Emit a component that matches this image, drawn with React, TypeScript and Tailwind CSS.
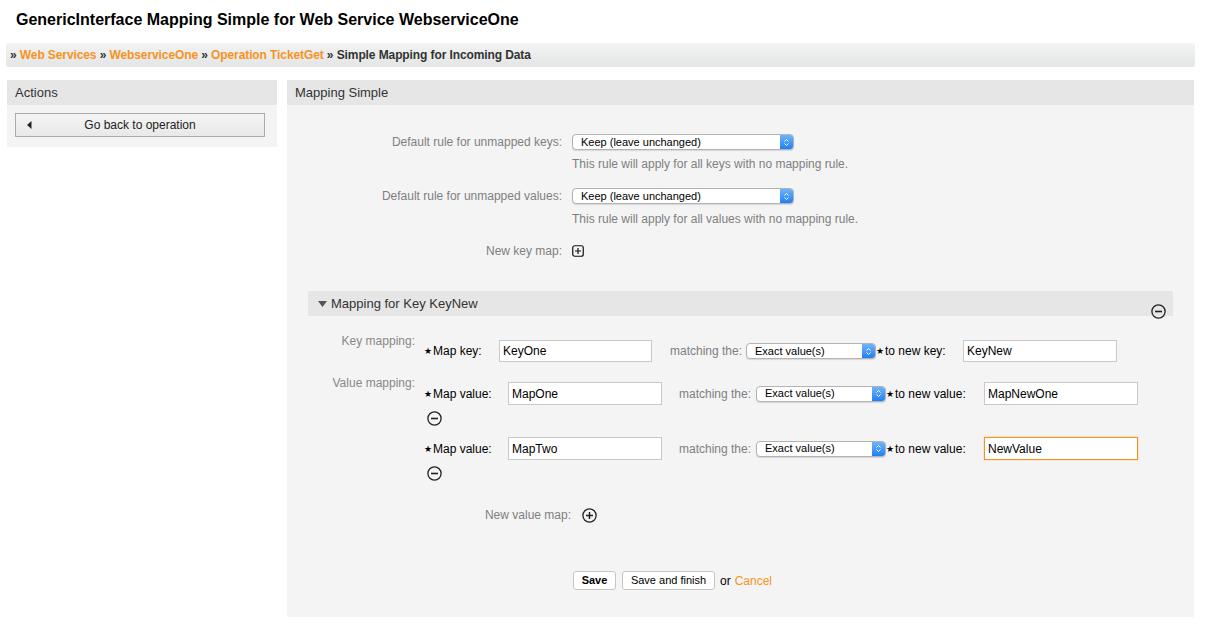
import React from "react";

const Star = () => <span className="text-[9px] leading-none mr-[1px] relative top-[-1px]">★</span>;

function Select({ w, h, label }: { w: string; h: string; label: string }) {
  return (
    <div className={`flex items-stretch bg-white border border-[#b3b3b3] rounded-[4px] shadow-[0_1px_1px_rgba(0,0,0,0.12)] overflow-hidden ${w} ${h}`}>
      <span className="flex-1 flex items-center pl-[8px] text-[11px] text-black leading-none whitespace-nowrap">{label}</span>
      <div className="w-[13px] bg-linear-to-b from-[#6db4fb] to-[#1c7ff5] flex items-center justify-center">
        <svg width="7" height="9" viewBox="0 0 7 9">
          <path d="M1.5 3.5 L3.5 1.5 L5.5 3.5" stroke="white" strokeWidth="1" fill="none" />
          <path d="M1.5 5.5 L3.5 7.5 L5.5 5.5" stroke="white" strokeWidth="1" fill="none" />
        </svg>
      </div>
    </div>
  );
}

const PlusSquare = () => (
  <svg width="12" height="12" viewBox="0 0 12 12">
    <rect x="0.75" y="0.75" width="10.5" height="10.5" rx="2" stroke="#111" strokeWidth="1.2" fill="none" />
    <path d="M6 3 V9 M3 6 H9" stroke="#111" strokeWidth="1.2" />
  </svg>
);

const PlusCircle = () => (
  <svg width="15" height="15" viewBox="0 0 15 15">
    <circle cx="7.5" cy="7.5" r="6.6" stroke="#222" strokeWidth="1.3" fill="none" />
    <path d="M7.5 4 V11 M4 7.5 H11" stroke="#222" strokeWidth="1.5" />
  </svg>
);

const MinusCircle = () => (
  <svg width="15" height="15" viewBox="0 0 15 15">
    <circle cx="7.5" cy="7.5" r="6.6" stroke="#222" strokeWidth="1.3" fill="none" />
    <path d="M4 7.5 H11" stroke="#222" strokeWidth="1.6" />
  </svg>
);

function Input({ value, w, h, focus }: { value: string; w: string; h: string; focus?: boolean }) {
  return (
    <div
      className={`flex items-center bg-white border ${focus ? "border-[#f7941d] shadow-[0_0_1px_#f7941d]" : "border-[#c9c9c9]"} pl-[3px] text-[12px] text-black ${w} ${h}`}
    >
      {value}
    </div>
  );
}

function ValueEntry({ mapValue, newValue, focus }: { mapValue: string; newValue: string; focus?: boolean }) {
  return (
    <div>
      <div className="flex items-center h-[23px] text-[12px]">
        <span className="w-[84px] text-black whitespace-nowrap"><Star />Map value:</span>
        <Input value={mapValue} w="w-[154px]" h="h-[23px]" />
        <span className="ml-[17px] w-[77px] text-[#7f7f7f] whitespace-nowrap">matching the:</span>
        <Select w="w-[130px]" h="h-[16px]" label="Exact value(s)" />
        <span className="w-[98px] text-black whitespace-nowrap"><Star />to new value:</span>
        <Input value={newValue} w="w-[154px]" h="h-[23px]" focus={focus} />
      </div>
      <div className="mt-[6px] ml-[3px] h-[15px]">
        <MinusCircle />
      </div>
    </div>
  );
}

export default function App() {
  return (
    <div className="w-[1210px] h-[627px] bg-white overflow-hidden font-['Liberation_Sans',Arial,sans-serif] text-[#333]">
      <h1 className="pl-[16px] pt-[10px] text-[16px] leading-[19px] font-bold text-black">
        GenericInterface Mapping Simple for Web Service WebserviceOne
      </h1>

      <div className="ml-[6px] w-[1189px] mt-[14px] h-[24px] rounded-[3px] bg-linear-to-b from-[#f2f3f3] to-[#e4e5e5] flex items-center pl-[4px] text-[12px] font-bold text-[#333] tracking-[-0.1px]">
        <span>»&nbsp;</span>
        <span className="text-[#f7931e]">Web Services</span>
        <span>&nbsp;»&nbsp;</span>
        <span className="text-[#f7931e]">WebserviceOne</span>
        <span>&nbsp;»&nbsp;</span>
        <span className="text-[#f7931e]">Operation TicketGet</span>
        <span>&nbsp;» Simple Mapping for Incoming Data</span>
      </div>

      <div className="flex mt-[13px] pl-[7px] gap-[10px] items-start">
        {/* Left panel */}
        <div className="w-[270px]">
          <div className="h-[25px] bg-[#e6e6e6] flex items-center pl-[8px] text-[13px] text-[#333]">Actions</div>
          <div className="bg-[#f4f4f4] h-[42px] pt-[8px] pl-[8px]">
            <div className="w-[250px] h-[24px] border border-[#ababab] bg-linear-to-b from-[#f4f4f4] to-[#e9e9e9] flex items-center text-[12px] text-[#222]">
              <svg width="5" height="8" viewBox="0 0 5 8" className="ml-[11px]">
                <polygon points="4.5,0 4.5,8 0,4" fill="#222" />
              </svg>
              <span className="flex-1 text-center pr-[16px]">Go back to operation</span>
            </div>
          </div>
        </div>

        {/* Right panel */}
        <div className="w-[907px]">
          <div className="h-[25px] bg-[#e6e6e6] flex items-center pl-[8px] text-[13px] text-[#333]">Mapping Simple</div>
          <div className="bg-[#f4f4f4] h-[512px] pt-[29px]">
            <div className="flex items-center h-[16px]">
              <span className="w-[275px] text-right text-[12px] text-[#7f7f7f]">Default rule for unmapped keys:</span>
              <div className="ml-[10px]">
                <Select w="w-[222px]" h="h-[16px]" label="Keep (leave unchanged)" />
              </div>
            </div>
            <div className="ml-[285px] mt-[6px] leading-[16px] text-[12px] text-[#7f7f7f]">
              This rule will apply for all keys with no mapping rule.
            </div>
            <div className="flex items-center h-[16px] mt-[16px]">
              <span className="w-[275px] text-right text-[12px] text-[#7f7f7f]">Default rule for unmapped values:</span>
              <div className="ml-[10px]">
                <Select w="w-[222px]" h="h-[16px]" label="Keep (leave unchanged)" />
              </div>
            </div>
            <div className="ml-[285px] mt-[7px] leading-[16px] text-[12px] text-[#7f7f7f]">
              This rule will apply for all values with no mapping rule.
            </div>
            <div className="flex items-center h-[16px] mt-[16px]">
              <span className="w-[275px] text-right text-[12px] text-[#7f7f7f]">New key map:</span>
              <div className="ml-[10px] flex items-center">
                <PlusSquare />
              </div>
            </div>

            {/* Subsection */}
            <div className="mt-[32px] mx-[21px]">
              <div className="relative h-[25px] bg-[#e6e6e6] flex items-center pl-[10px] text-[13px] text-[#333]">
                <svg width="9" height="6" viewBox="0 0 9 6">
                  <polygon points="0,0 9,0 4.5,6" fill="#555" />
                </svg>
                <span className="ml-[4px]">Mapping for Key KeyNew</span>
                <div className="absolute right-[7px] top-[13px]">
                  <MinusCircle />
                </div>
              </div>

              <div className="pt-[18px]">
                <div className="flex items-start">
                  <span className="w-[107px] text-right text-[12px] leading-[14px] text-[#888]">Key mapping:</span>
                  <div className="ml-[9px] mt-[6px] flex items-center h-[22px] text-[12px]">
                    <span className="w-[75px] text-black whitespace-nowrap"><Star />Map key:</span>
                    <Input value="KeyOne" w="w-[153px]" h="h-[22px]" />
                    <span className="ml-[18px] w-[76px] text-[#7f7f7f] whitespace-nowrap">matching the:</span>
                    <Select w="w-[130px]" h="h-[16px]" label="Exact value(s)" />
                    <span className="w-[87px] text-black whitespace-nowrap"><Star />to new key:</span>
                    <Input value="KeyNew" w="w-[154px]" h="h-[22px]" />
                  </div>
                </div>

                <div className="flex items-start mt-[14px]">
                  <span className="w-[107px] text-right text-[12px] leading-[14px] text-[#888]">Value mapping:</span>
                  <div className="ml-[9px] mt-[6px]">
                    <ValueEntry mapValue="MapOne" newValue="MapNewOne" />
                    <div className="mt-[11px]">
                      <ValueEntry mapValue="MapTwo" newValue="NewValue" focus />
                    </div>
                  </div>
                </div>

                <div className="flex items-center h-[16px] mt-[26px]">
                  <span className="w-[263px] text-right text-[12px] text-[#7f7f7f]">New value map:</span>
                  <div className="ml-[11px] flex items-center">
                    <PlusCircle />
                  </div>
                </div>

                <div className="flex items-center mt-[48px] ml-[265px] text-[12px]">
                  <button className="h-[19px] w-[43px] border border-[#c5c5c5] rounded-[3px] bg-white text-[11px] font-bold text-black">
                    Save
                  </button>
                  <button className="ml-[6px] h-[19px] w-[93px] border border-[#c5c5c5] rounded-[3px] bg-white text-[11px] text-black">
                    Save and finish
                  </button>
                  <span className="ml-[5px] text-black">or</span>
                  <span className="ml-[4px] text-[#f7931e]">Cancel</span>
                </div>
              </div>
            </div>
          </div>
        </div>
      </div>
    </div>
  );
}
